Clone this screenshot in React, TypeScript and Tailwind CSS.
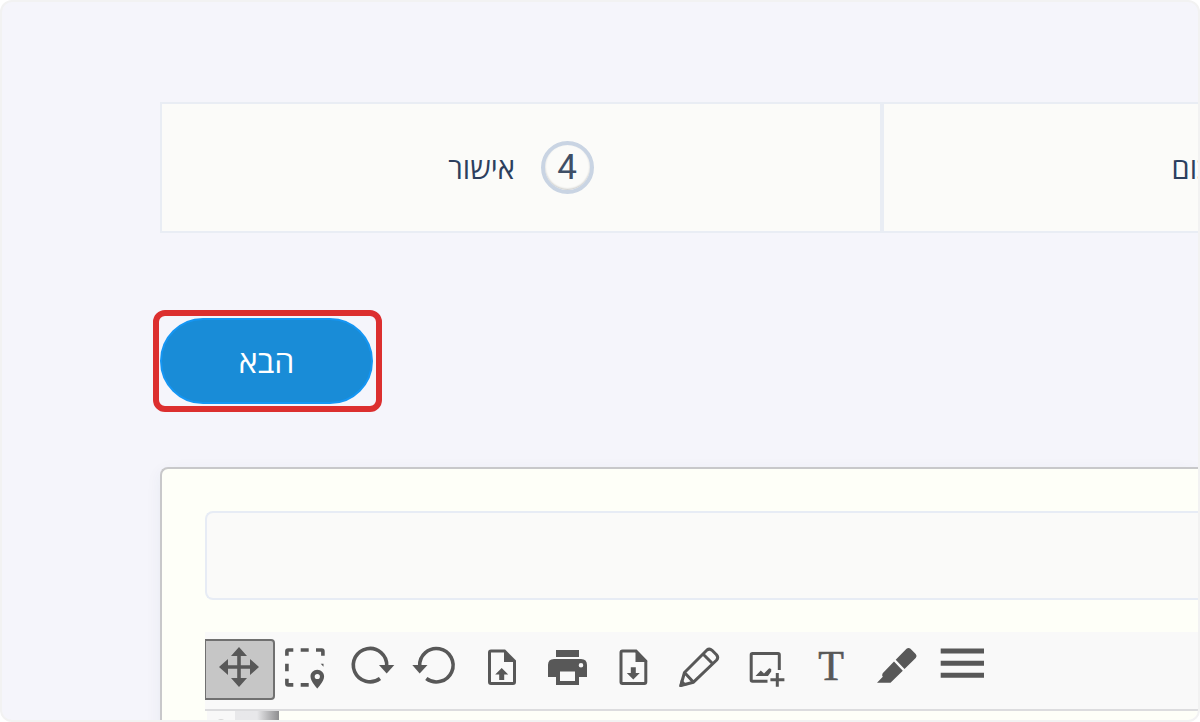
import React from 'react';

interface StepProps {
  number: number;
  label: string;
}

const Step: React.FC<StepProps> = ({ number, label }) => (
  <li
    dir="rtl"
    className="flex h-[131px] w-[722px] shrink-0 items-center justify-center gap-[26px] border-2 border-[#e9edf4] bg-[#fbfbf9]"
  >
    <span className="flex h-[53px] w-[53px] items-center justify-center rounded-full border-4 border-[#c9d4e3] font-[Roboto,sans-serif] text-[35px] leading-none text-[#3f4f66] shadow-[inset_0_-1px_2px_rgba(0,0,0,0.2)]">
      {number}
    </span>
    <span className="text-[29px] leading-10 text-[#2c3f5e]">{label}</span>
  </li>
);

const tools = [
  {
    label: 'Select area',
    icon: (
      <>
        <path
          fill="none"
          stroke="currentColor"
          strokeWidth="3.6"
          d="M11.9 11.7V7.2q0-1.2 1.2-1.2h5.2M25.7 6h8M41 6h5.7q1.2 0 1.2 1.2v4.5M11.9 19.7v7.6M11.9 34.7v5q0 1.2 1.2 1.2h5.2M25.7 40.9h8"
        />
        <path d="M45.700 19.700h2.800v3z" />
        <path
          fillRule="evenodd"
          d="M42.300 25.700c-3.800 0-6.800 3-6.800 6.700 0 4.800 6.800 12 6.800 12s6.800-7.200 6.800-12c0-3.700-3-6.700-6.800-6.700zm0 4.200a2.600 2.600 0 1 1 0 5.200 2.600 2.600 0 0 1 0-5.200z"
        />
      </>
    ),
  },
  {
    label: 'Rotate right',
    icon: (
      <>
        <path fill="none" stroke="currentColor" strokeWidth="3.6" d="M39 34.5A16.7 16.7 0 1 1 45.7 22" />
        <path d="M38 21h15.300l-7.600 8.500z" />
      </>
    ),
  },
  {
    label: 'Rotate left',
    icon: (
      <>
        <path fill="none" stroke="currentColor" strokeWidth="3.6" d="M19.3 34.5A16.7 16.7 0 1 0 12.7 22" />
        <path d="M5.300 21h15.200l-7.800 8.500z" />
      </>
    ),
  },
  {
    label: 'Upload',
    icon: (
      <>
        <path
          fill="none"
          stroke="currentColor"
          strokeWidth="3"
          d="M31.5 7H18q-1.5 0-1.5 1.5v29.5q0 1.5 1.5 1.5h22q1.5 0 1.5-1.5V17z"
        />
        <path d="M31 6v12h12zM28.700 24l6.500 6.500h-4V36h-5v-5.500h-4z" />
      </>
    ),
  },
  {
    label: 'Print',
    icon: (
      <path
        fillRule="evenodd"
        d="M17 6h23v7H17zM15 15h27q6 0 6 6v12h-8v8H17v-8H9V21q0-6 6-6zM21 27.500v9.500h15v-9.500zM42 19a2.300 2.300 0 1 0 0 4.600 2.300 2.300 0 0 0 0-4.600z"
      />
    ),
  },
  {
    label: 'Download',
    icon: (
      <>
        <path
          fill="none"
          stroke="currentColor"
          strokeWidth="3"
          d="M31 7H17.5q-1.5 0-1.5 1.5v29.5q0 1.5 1.5 1.5h21.8q1.5 0 1.5-1.5V17z"
        />
        <path d="M30.500 6v12h12zM28.300 35.500L21.800 29h4v-5.700h5V29h4z" />
      </>
    ),
  },
  {
    label: 'Draw',
    icon: (
      <>
        <path
          fill="none"
          stroke="currentColor"
          strokeWidth="3"
          strokeLinejoin="round"
          d="M9.8 41.5L13.5 28.5 36 6q2.5-2 5 .3l4.5 4.5q2.3 2.7.2 5.2L22.5 38.2zM13.5 28.5l9 9.7M32 10l10 10"
        />
        <path d="M8.300 43l1.800-8 6.200 6z" />
      </>
    ),
  },
  {
    label: 'Add image',
    icon: (
      <>
        <path
          fill="none"
          stroke="currentColor"
          strokeWidth="3"
          d="M42.3 26V10.8q0-1.3-1.3-1.3H15.5q-1.3 0-1.3 1.3v25.2q0 1.3 1.3 1.3h15M40.3 29v13.8M33.4 35.8h14"
        />
        <path d="M18.500 32l5.300-5.600 3.200 3 5.200-5.200 2 .8v2.500L31 32z" />
      </>
    ),
  },
  {
    label: 'Text',
    icon: (
      <text
        x="28"
        y="36"
        textAnchor="middle"
        stroke="currentColor"
        strokeWidth="0.6"
        className="font-['Liberation_Serif',serif] text-[42px]"
      >
        T
      </text>
    ),
  },
  {
    label: 'Highlight',
    icon: (
      <path d="M26.700 15.800L37.500 4.800q2-1.800 4 0l5.200 5.200q1.800 2 0 4L35.500 25zM25 17.500l8.800 9.300L21.500 38.700H8l5.800-6-.7-1.500.6-2z" />
    ),
  },
  {
    label: 'Menu',
    icon: <path d="M5.700 4.500H49v5H5.700zM5.700 16.700H49v5H5.700zM5.700 28.800H49v5H5.700z" />,
  },
];

const App: React.FC = () => {
  return (
    <div className="h-screen overflow-hidden rounded-xl border-2 border-[#f2f2f2] bg-[#f5f5fb] pl-[158px] pt-[100px] font-['Open_Sans','Noto_Sans',sans-serif]">
      <ol className="flex">
        <Step number={4} label="אישור" />
        <Step number={3} label="סיכום" />
      </ol>

      <div className="-ml-[7px] mt-[77px] flex h-[102px] w-[229px] items-center rounded-xl border-[6px] border-[#dc2f2f] pl-px">
        <button
          type="button"
          className="h-[86px] w-[213px] rounded-full border-2 border-[#1596f3] bg-[#198cd7] text-[32px] font-medium leading-10 text-white"
        >
          הבא
        </button>
      </div>

      <main className="mt-[55px] rounded-tl-lg border-l-2 border-t-2 border-[#c8c8ca] bg-[#fefff8] pl-[43px] pt-[42px] shadow-[0_4px_16px_rgba(30,60,110,0.06)]">
        <input
          type="text"
          aria-label="Title"
          className="block h-[89px] w-full rounded-l-lg border-2 border-r-0 border-[#e7ecf5] bg-[#fafaf9] px-4 text-2xl outline-none"
        />

        <div
          role="toolbar"
          className="mt-8 flex h-[79px] items-start gap-0.5 border-b-2 border-[#dcdcde] bg-[#f9f9f9] pt-[7px] text-[#585858]"
        >
          <button
            type="button"
            aria-label="Move"
            className="-mr-0.5 flex h-[61px] w-[70px] shrink-0 justify-center rounded-r border-2 border-l border-[#707070] bg-[#c6c6c6] pr-0.5 pt-1.5"
          >
            <svg viewBox="0 0 40 40" className="h-10 w-10" fill="currentColor">
              <path d="M20 0l8 9h-6.200v9.200H31V12l9 8-9 8v-6.200h-9.200V31H28l-8 9-8-9h6.200v-9.200H9V28l-9-8 9-8v6.200h9.200V9H12z" />
            </svg>
          </button>
          {tools.map((tool) => (
            <button
              key={tool.label}
              type="button"
              aria-label={tool.label}
              className="flex h-[58px] w-16 shrink-0 items-center"
            >
              <svg viewBox="0 0 64 48" className="h-12 w-16" fill="currentColor">
                {tool.icon}
              </svg>
            </button>
          ))}
        </div>

        <div className="flex h-10 pl-0.5">
          <div className="flex w-7 justify-center bg-[#f8f8f8] pt-2">
            <span className="h-2 w-2 rounded-full bg-[#d8d8d8]"></span>
          </div>
          <div className="w-11 bg-linear-to-r from-[#e8e8ea] from-50% to-[#8e8e90]"></div>
        </div>
      </main>
    </div>
  );
};

export default App;
